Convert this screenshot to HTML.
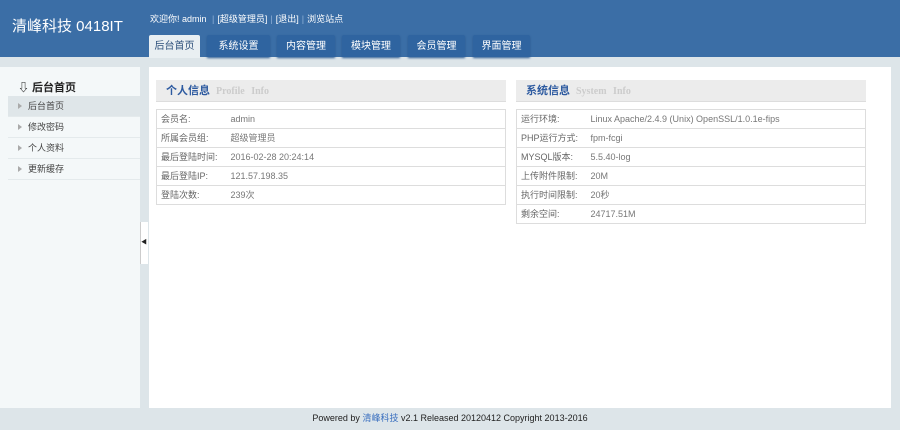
<!DOCTYPE html>
<html><head><meta charset="utf-8"><style>
*{margin:0;padding:0;box-sizing:border-box}
body{width:900px;height:430px;background:#dde5e9;font-family:"Liberation Sans","Noto Sans CJK SC",sans-serif;font-size:9px;color:#555;position:relative;overflow:hidden}
#hd{position:absolute;left:0;top:0;width:900px;height:57px;background:#3b6ea6}
#logo{position:absolute;left:12px;top:15px;color:#fff;font-size:15px}
#top{position:absolute;left:150px;top:12px;color:#fff;font-size:9px}
#top span{color:#8fb0d6;margin:0 3px}
.tab{position:absolute;top:35px;height:22px;background:#2f64a0;color:#fff;font-size:10px;line-height:24px;text-align:center;border-radius:2px 2px 0 0;box-shadow:0 1px 2px #2a5a90}
.tab.on{background:#e9eff2;color:#2c4f7a;box-shadow:none;height:23px}
#side{position:absolute;left:0;top:67px;width:140px;height:341px;background:#f4f8f9}
#side h3{position:absolute;left:18px;top:12px;font-size:11px;color:#222}
.it{position:absolute;left:8px;width:132px;height:21px;line-height:20px;border-bottom:1px solid #e4eaec;padding-left:20px;color:#444;font-size:9px}
.it:before{content:"";position:absolute;left:10px;top:7px;border-left:4px solid #aaa;border-top:3px solid transparent;border-bottom:3px solid transparent}
.it.on{background:#dfe6e9}
#main{position:absolute;left:149px;top:67px;width:742px;height:341px;background:#fff}
.ph{position:absolute;height:22px;background:#ececec;border-bottom:1px solid #ddd;padding-left:10px;line-height:22px;font-size:11px;font-weight:bold;color:#2d5aa0}
.ph i{font-style:normal;font-family:"Liberation Serif",serif;font-size:10px;color:#ccc;margin-left:6px;word-spacing:4px}
table{position:absolute;border-collapse:collapse;border:1px solid #ddd}
td{height:19px;line-height:18px;border-bottom:1px solid #ddd;padding-left:4px;font-size:9px;color:#666;vertical-align:middle}
td+td{color:#777}
#tog{position:absolute;left:140px;top:222px;width:8px;height:42px;background:#fff;border-left:1px solid #ccc;font-size:6px;line-height:42px;color:#222}
#ft{position:absolute;left:0;top:408px;width:900px;height:22px;line-height:20px;text-align:center;font-size:9px;color:#222}
#ft b{font-weight:normal;color:#3a6fbf}
</style></head><body>
<div id="hd">
<div id="logo">清峰科技 0418IT</div>
<div id="top">欢迎你! admin <span>|</span>[超级管理员]<span>|</span>[退出]<span>|</span>浏览站点</div>
<div class="tab on" style="left:149px;width:51px">后台首页</div>
<div class="tab" style="left:207px;width:63px">系统设置</div>
<div class="tab" style="left:277px;width:58px">内容管理</div>
<div class="tab" style="left:342px;width:58px">模块管理</div>
<div class="tab" style="left:408px;width:57px">会员管理</div>
<div class="tab" style="left:473px;width:57px">界面管理</div>
</div>
<div id="side">
<h3>⇩ 后台首页</h3>
<div class="it on" style="top:29px">后台首页</div>
<div class="it" style="top:50px">修改密码</div>
<div class="it" style="top:71px">个人资料</div>
<div class="it" style="top:92px">更新缓存</div>
</div>
<div id="tog">◀</div>
<div id="main">
<div class="ph" style="left:7px;top:13px;width:350px">个人信息<i>Profile Info</i></div>
<table style="left:7px;top:42px;width:350px">
<tr><td style="width:70px">会员名:</td><td>admin</td></tr>
<tr><td>所属会员组:</td><td>超级管理员</td></tr>
<tr><td>最后登陆时间:</td><td>2016-02-28 20:24:14</td></tr>
<tr><td>最后登陆IP:</td><td>121.57.198.35</td></tr>
<tr><td>登陆次数:</td><td>239次</td></tr>
</table>
<div class="ph" style="left:367px;top:13px;width:350px">系统信息<i>System Info</i></div>
<table style="left:367px;top:42px;width:350px">
<tr><td style="width:70px">运行环境:</td><td>Linux Apache/2.4.9 (Unix) OpenSSL/1.0.1e-fips</td></tr>
<tr><td>PHP运行方式:</td><td>fpm-fcgi</td></tr>
<tr><td>MYSQL版本:</td><td>5.5.40-log</td></tr>
<tr><td>上传附件限制:</td><td>20M</td></tr>
<tr><td>执行时间限制:</td><td>20秒</td></tr>
<tr><td>剩余空间:</td><td>24717.51M</td></tr>
</table>
</div>
<div id="ft">Powered by <b>清峰科技</b> v2.1 Released 20120412 Copyright 2013-2016</div>
</body></html>
